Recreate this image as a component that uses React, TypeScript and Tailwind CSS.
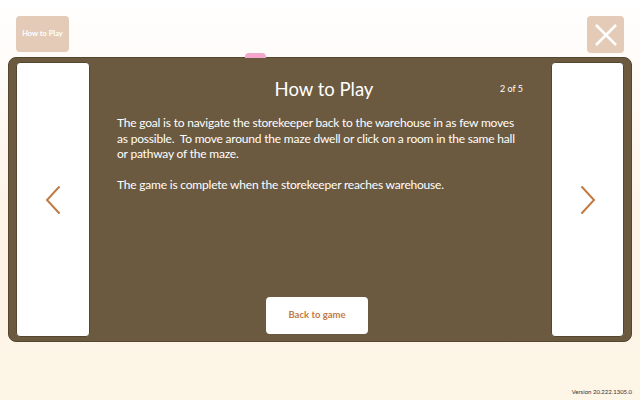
import React from 'react';

const font = { fontFamily: 'Lato, "Noto Sans", sans-serif' };

const Chevron: React.FC<{ dir: 'left' | 'right' }> = ({ dir }) => (
  <svg width="18" height="30" viewBox="0 0 18 30" fill="none">
    <path
      d={dir === 'left' ? 'M15 2 L3 15 L15 28' : 'M3 2 L15 15 L3 28'}
      stroke="#c27a45"
      strokeWidth="2"
      strokeLinecap="round"
      strokeLinejoin="miter"
    />
  </svg>
);

const App: React.FC = () => {
  return (
    <div
      className="w-[640px] h-[400px] flex flex-col bg-gradient-to-b from-white via-[#fdf3e8] to-[#fdf5e6] overflow-hidden relative"
      style={font}
    >
      {/* Top bar */}
      <div className="flex justify-between items-start pt-4 px-4 pr-4 h-[57px]">
        <button className="w-[53px] h-[36px] rounded bg-[#e3cbb7] text-white text-[7.5px] font-bold whitespace-nowrap">
          How to Play
        </button>
        <button className="w-[37px] h-[37px] rounded-sm bg-[#e3cbb7] flex items-center justify-center">
          <svg width="24" height="24" viewBox="0 0 24 24">
            <path d="M2 2 L22 22 M22 2 L2 22" stroke="white" strokeWidth="2.5" />
          </svg>
        </button>
      </div>

      {/* Main panel */}
      <div className="relative mx-2 h-[285px] rounded-lg bg-[#6c5a40] border border-[#55462f] flex p-[4px] pl-[7px] pr-[7px]">
        <div className="absolute left-[236px] -top-[5px] w-[21px] h-[5px] rounded-t-sm bg-[#f4a6cc]" />

        <div className="w-[74px] bg-white rounded-sm border border-[#55462f] flex items-center justify-center">
          <Chevron dir="left" />
        </div>

        <div className="flex-1 flex flex-col text-white pl-[27px] pr-[30px]">
          <div className="relative flex justify-center pt-[14px] pl-[10px]">
            <h1 className="text-[18.5px] leading-[26px]">How to Play</h1>
            <span className="absolute -right-[2px] top-[20px] text-[9px]">2 of 5</span>
          </div>
          <div className="mt-[13px] text-[12px] leading-[15.5px] tracking-[-0.2px]">
            <p>
              The goal is to navigate the storekeeper back to the warehouse in as few moves as possible.&nbsp; To
              move around the maze dwell or click on a room in the same hall or pathway of the maze.
            </p>
            <p className="mt-[15px]">The game is complete when the storekeeper reaches warehouse.</p>
          </div>
          <div className="flex-1" />
          <div className="flex justify-center mb-[3px] mr-[4px]">
            <button className="w-[102px] h-[37px] bg-white rounded-sm text-[#c27a45] text-[9.5px] font-bold">
              Back to game
            </button>
          </div>
        </div>

        <div className="w-[73px] bg-white rounded-sm border border-[#55462f] flex items-center justify-center">
          <Chevron dir="right" />
        </div>
      </div>

      <div className="flex-1" />
      <div className="flex justify-end pr-[8px] pb-[4px] text-[6px] text-[#333]">Version 20.222.1305.0</div>
    </div>
  );
};

export default App;
